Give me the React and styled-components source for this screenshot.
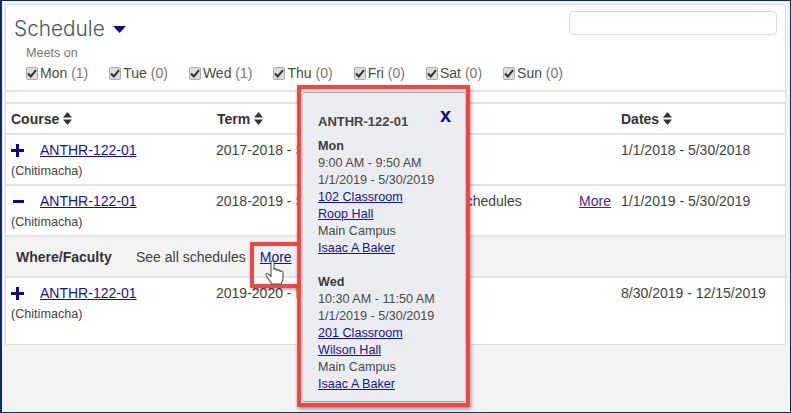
import React from "react";
import styled, { createGlobalStyle } from "styled-components";

const Global = createGlobalStyle`
  html, body { margin: 0; padding: 0; background: #f3f3f3; }
  body { font-family: "Liberation Sans", Arial, sans-serif; font-size: 14px; color: #3a3a3a; }
`;

const Frame = styled.div`
  position: relative;
  box-sizing: border-box;
  width: 791px;
  height: 413px;
  overflow: hidden;
  background: #f3f3f3;
  border: solid #0a2a6b;
  border-width: 1px 1px 1px 2px;
  padding: 3px 4px 0 3px;
`;

const Card = styled.section`
  box-sizing: border-box;
  height: 341px;
  background: #fff;
  border: 1px solid #dedede;
  border-radius: 3px 3px 0 0;
`;

const TopBar = styled.header`
  box-sizing: border-box;
  height: 87px;
  padding: 6px 8px 0 8px;
  border-bottom: 2px solid #e4e4e4;
  display: flex;
  justify-content: space-between;
`;

const TitleBlock = styled.div`
  display: flex;
  flex-direction: column;
`;

const Heading = styled.h1`
  margin: 0;
  display: flex;
  align-items: center;
  gap: 8px;
  font: 300 20.8px/36px Inter, sans-serif;
  color: #44546a;
`;

const Meets = styled.div`
  margin: -1px 0 0 12px;
  font-size: 12.6px;
  line-height: 15px;
  color: #777;
`;

const Days = styled.div`
  margin: 4px 0 0 12px;
  display: flex;
  gap: 21px;
`;

const Day = styled.label`
  display: flex;
  align-items: center;
  gap: 2px;
  font-size: 14px;
  line-height: 16px;
  color: #4a4a4a;
  white-space: nowrap;
`;

const Count = styled.span`
  color: #777;
`;

const Box = styled.span`
  box-sizing: border-box;
  width: 12px;
  height: 13px;
  border: 1px solid #ababab;
  border-radius: 2px;
  background: #dcdcdc;
  display: flex;
  align-items: center;
  justify-content: center;
`;

const Search = styled.input`
  box-sizing: border-box;
  width: 208px;
  height: 24px;
  border: 1px solid #dcdcdc;
  border-radius: 4px;
  background: #fff;
`;

const Spacer = styled.div`
  height: 10px;
`;

const Row = styled.div`
  box-sizing: border-box;
  height: ${(p) => p.$h}px;
  display: grid;
  grid-template-columns: 205px 196px 209px 1fr;
  padding-left: 5px;
  border-top: 2px solid #e4e4e4;
  background: #fff;
  color: #3f3f3f;
  line-height: 20px;
`;

const HeadCell = styled.div`
  font-weight: 700;
  color: #333;
  padding-top: 5px;
  display: flex;
  align-items: flex-start;
  gap: 4px;
  line-height: 20px;
  margin-left: ${(p) => (p.$nudge ? 1 : 0)}px;
`;

const Cell = styled.div`
  padding-top: 5px;
  white-space: nowrap;
  overflow: hidden;
`;

const WhereCell = styled(Cell)`
  display: flex;
  justify-content: space-between;
  padding-right: 10px;
`;

const CourseLine = styled.div`
  display: flex;
  align-items: center;
  height: 20px;
`;

const Toggle = styled.span`
  width: 29px;
  display: flex;
  align-items: center;
`;

const Campus = styled.div`
  margin-top: 1px;
  font-size: 12.6px;
  line-height: 20px;
  color: #444;
`;

const A = styled.a`
  color: ${(p) => (p.$visited ? "#551a8b" : "#14129c")};
  text-decoration: underline;
`;

const Detail = styled.div`
  box-sizing: border-box;
  height: 41px;
  display: flex;
  align-items: center;
  padding: 0 0 0 10px;
  border-top: 2px solid #e4e4e4;
  background: #f3f3f3;
  color: #3f3f3f;
`;

const DetailLabel = styled.strong`
  width: 120px;
  color: #333;
`;

const DetailMore = styled(A)`
  margin-left: 14px;
`;

const Popover = styled.aside`
  position: absolute;
  left: 295px;
  top: 84px;
  box-sizing: border-box;
  width: 173px;
  height: 322px;
  border: 4px solid #f44545;
  box-shadow: 1px 2px 4px rgba(0, 0, 0, 0.4);
  background: #d8d8d8;
  padding: 3px 0 0 1px;
`;

const Panel = styled.div`
  position: relative;
  box-sizing: border-box;
  width: 164px;
  height: 310px;
  background: #ecedf2;
  border: 1px solid #c9c9c9;
  border-top-color: #a9a9a9;
  border-bottom-color: #a0a0a0;
  border-radius: 4px;
  padding: 20px 15px 0 15px;
  font-size: 12.6px;
  line-height: 17px;
  color: #4a4a4a;
`;

const Close = styled.span`
  position: absolute;
  right: 14px;
  top: 10px;
  font: 700 20px/24px "Liberation Sans", sans-serif;
  color: #0a0a8c;
`;

const PopTitle = styled.div`
  width: fit-content;
  font-size: 13px;
  font-weight: 700;
  line-height: 17px;
  color: #444;
  margin-bottom: 8px;
`;

const DayName = styled.div`
  font-weight: 700;
  color: #3a3a3a;
`;

const Meeting = styled.div`
  margin-bottom: 17px;
`;

const Line = styled.div``;

const Highlight = styled.div`
  position: absolute;
  left: 248px;
  top: 241px;
  box-sizing: border-box;
  width: 51px;
  height: 46px;
  border: 4px solid #f44545;
  box-shadow: 1px 2px 3px rgba(0, 0, 0, 0.3);
`;

const Pointer = styled.svg`
  position: absolute;
  left: 263px;
  top: 259px;
`;

const Caret = () => (
  <svg width="13" height="7" viewBox="0 0 13 7"><path d="M0 0h13L6.5 7z" fill="#0a0a8c" /></svg>
);

const Sort = () => (
  <svg width="9" height="13" viewBox="0 0 9 13" style={{ marginTop: 3 }}>
    <path d="M4.5 0 9 5.5H0zM0 7.500h9L4.500 13z" fill="#333" />
  </svg>
);

const Check = () => (
  <svg width="10" height="9" viewBox="0 0 10 9"><path d="M1 4.500 3.800 7.500 9 1.200" fill="none" stroke="#333" strokeWidth="2" /></svg>
);

const Plus = () => (
  <svg width="13" height="13" viewBox="0 0 13 13"><path d="M5 0h3v5h5v3H8v5H5V8H0V5h5z" fill="#0a0a8c" /></svg>
);

const Minus = () => (
  <svg width="12" height="3" viewBox="0 0 12 3" style={{ marginLeft: 2 }}><rect width="11" height="3" fill="#0a0a8c" /></svg>
);

const days = [["Mon", 1], ["Tue", 0], ["Wed", 1], ["Thu", 0], ["Fri", 0], ["Sat", 0], ["Sun", 0]];

const Course = ({ icon }) => (
  <Cell>
    <CourseLine>
      <Toggle>{icon}</Toggle>
      <A href="#">ANTHR-122-01</A>
    </CourseLine>
    <Campus>(Chitimacha)</Campus>
  </Cell>
);

const meetings = [
  ["Mon", "9:00 AM - 9:50 AM", "102 Classroom", "Roop Hall"],
  ["Wed", "10:30 AM - 11:50 AM", "201 Classroom", "Wilson Hall"],
];

export default function App() {
  return (
    <>
      <Global />
      <Frame>
        <Card>
          <TopBar>
            <TitleBlock>
              <Heading>Schedule <Caret /></Heading>
              <Meets>Meets on</Meets>
              <Days>
                {days.map(([d, n]) => (
                  <Day key={d}>
                    <Box><Check /></Box>
                    <span>{d} <Count>({n})</Count></span>
                  </Day>
                ))}
              </Days>
            </TitleBlock>
            <Search />
          </TopBar>
          <Spacer />
          <Row $h={31}>
            <HeadCell>Course <Sort /></HeadCell>
            <HeadCell $nudge>Term <Sort /></HeadCell>
            <HeadCell />
            <HeadCell>Dates <Sort /></HeadCell>
          </Row>
          <Row $h={51}>
            <Course icon={<Plus />} />
            <Cell>2017-2018 - Spring</Cell>
            <Cell />
            <Cell>1/1/2018 - 5/30/2018</Cell>
          </Row>
          <Row $h={51}>
            <Course icon={<Minus />} />
            <Cell>2018-2019 - Spring</Cell>
            <WhereCell>
              <span>See all schedules</span>
              <A href="#" $visited>More</A>
            </WhereCell>
            <Cell>1/1/2019 - 5/30/2019</Cell>
          </Row>
          <Detail>
            <DetailLabel>Where/Faculty</DetailLabel>
            <span>See all schedules</span>
            <DetailMore href="#">More</DetailMore>
          </Detail>
          <Row $h={67}>
            <Course icon={<Plus />} />
            <Cell>2019-2020 - Fall</Cell>
            <Cell />
            <Cell>8/30/2019 - 12/15/2019</Cell>
          </Row>
        </Card>
        <Highlight />
        <Pointer width="20" height="26" viewBox="0 0 20 26">
          <path
            d="M6 2c0-1.600 3-1.600 3 0v8c0-1.500 3-1.500 3 0v1c0-1.500 3-1.500 3 0v1c0-1.300 3-1.300 3 0v6c0 3-1 4-2 6H7c-1-2-5-6-6-9-.4-1.500 1.500-2 2.500-1L6 16.500z"
            fill="#fff"
            stroke="#555"
            strokeWidth="1.100"
          />
        </Pointer>
        <Popover>
          <Panel>
            <Close>x</Close>
            <PopTitle>ANTHR-122-01</PopTitle>
            {meetings.map(([d, t, room, hall]) => (
              <Meeting key={d}>
                <DayName>{d}</DayName>
                <Line>{t}</Line>
                <Line>1/1/2019 - 5/30/2019</Line>
                <Line><A href="#">{room}</A></Line>
                <Line><A href="#">{hall}</A></Line>
                <Line>Main Campus</Line>
                <Line><A href="#">Isaac A Baker</A></Line>
              </Meeting>
            ))}
          </Panel>
        </Popover>
      </Frame>
    </>
  );
}
